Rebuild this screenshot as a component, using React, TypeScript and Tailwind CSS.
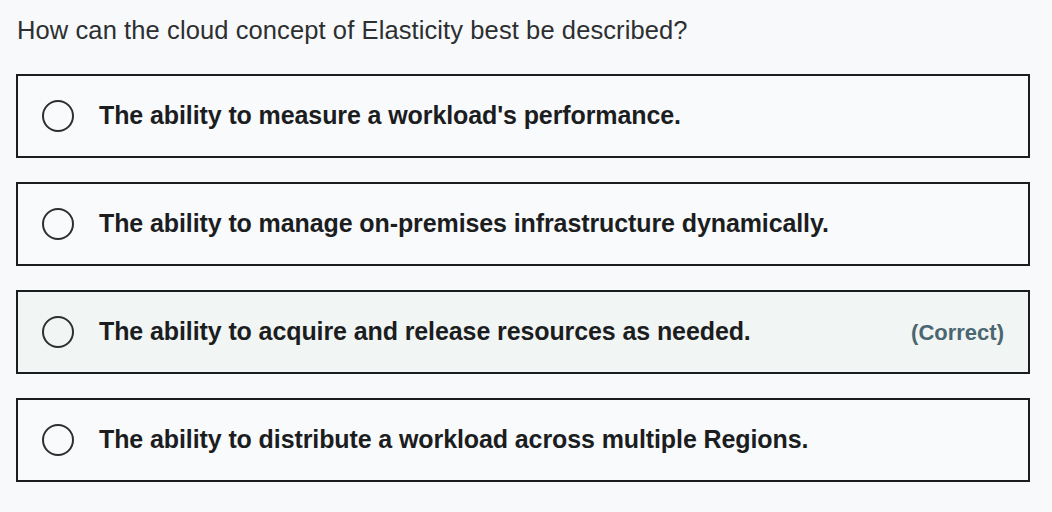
const options = [
  { text: "The ability to measure a workload's performance.", correct: false },
  { text: "The ability to manage on-premises infrastructure dynamically.", correct: false },
  { text: "The ability to acquire and release resources as needed.", correct: true },
  { text: "The ability to distribute a workload across multiple Regions.", correct: false },
];

export default function App() {
  return (
    <div className="h-[512px] w-[1052px] bg-[#f7f9fb] px-4 pt-[14px] font-['Liberation_Sans',sans-serif] text-[#1c1d1f]">
      <p className="pl-[1px] text-[25.5px] leading-[32px] tracking-[0.1px] text-[#2d2f31]">
        How can the cloud concept of Elasticity best be described?
      </p>
      <div className="mt-[28px] flex w-[1014px] flex-col gap-[24px]">
        {options.map((o) => (
          <div
            key={o.text}
            className={`flex h-[84px] items-center border-2 border-[#1c1d1f] pl-[24px] pr-[24px] ${
              o.correct ? "bg-[#f1f5f4]" : "bg-[#f8fafc]"
            }`}
          >
            <span className="h-[32px] w-[32px] shrink-0 rounded-full border-2 border-[#2d2f31]" />
            <span className="ml-[25px] flex-1 text-[25px] font-bold tracking-[-0.1px]">{o.text}</span>
            {o.correct && (
              <span className="text-[22px] font-bold text-[#4a6670]">(Correct)</span>
            )}
          </div>
        ))}
      </div>
    </div>
  );
}
